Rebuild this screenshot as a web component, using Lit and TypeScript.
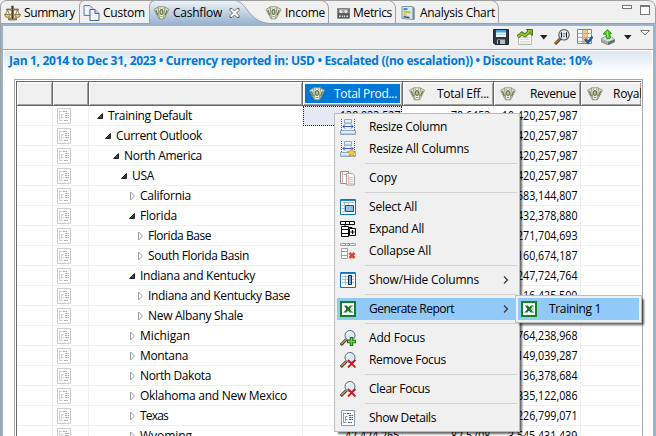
import { LitElement, html, css, svg, nothing, TemplateResult } from "lit";
import { customElement, property } from "lit/decorators.js";

/* A label that fills a given width, by tracking its letters or by narrowing them. */
@customElement("fit-text")
class FitText extends LitElement {
  @property({ type: Number }) width = 0;
  @property() text = "";
  @property({ type: Boolean }) narrow = false;
  static styles = css`
    :host { display: inline-block; flex: none; white-space: pre; }
    span { display: inline-block; transform-origin: 0 50%; }
  `;
  updated() {
    const s = this.shadowRoot!.querySelector("span")!;
    s.style.letterSpacing = "0px";
    s.style.transform = "none";
    const natural = s.getBoundingClientRect().width;
    if (!this.width || !this.text.length) return;
    if (this.narrow) {
      s.style.transform = `scaleX(${this.width / natural})`;
      this.style.width = this.width + "px";
    } else {
      s.style.letterSpacing = (this.width - natural) / this.text.length + "px";
    }
  }
  render() {
    return html`<span>${this.text}</span>`;
  }
}

const icons: Record<string, TemplateResult> = {
  scales: svg`<path d="M7 1h2v3h5v1h-5v8h3v2H4v-2h3V5H2V4h5z" fill="#b39b55" stroke="#5e4a1c" stroke-width=".6"/><path d="M3 5L.8 10M3 5l2.2 5M13 5l-2.2 5M13 5l2.2 5" stroke="#7d6a35" fill="none" stroke-width=".8"/><path d="M0 9.5h6q-.5 3-3 3t-3-3zM10 9.5h6q-.5 3-3 3t-3-3z" fill="#dccb8d" stroke="#69552a" stroke-width=".7"/><path d="M8 1v13" stroke="#4d3c18"/>`,
  pages: svg`<path d="M.5 .5h6l3 3v7h-9z" fill="#d7e2f0" stroke="#6280ae"/><path d="M2 2h3v7H2z" fill="#f6faff"/><path d="M6.500 4.500h5l4 4v7h-9z" fill="#f3f7fd" stroke="#4a628f"/><path d="M11.500 4.500v4h4" fill="#c3d3ea" stroke="#4a628f"/>`,
  cash: svg`<path d="M.5 4.300L4.500 2.200 8 12.500l-2.500 1.300zM15.500 4.300L11.500 2.200 8 12.500l2.500 1.300z" fill="#dfe4d0" stroke="#8a9272" stroke-width=".9"/><path d="M4.500 1.800h7L10 13.800H6z" fill="#eef1e4" stroke="#8a9272" stroke-width=".9"/><path d="M2.300 5l2.200 5.200M13.700 5l-2.200 5.200" stroke="#6f7d55" stroke-width="1.300" fill="none"/><ellipse cx="8" cy="7" rx="1.500" ry="2.400" fill="#c5cdb0" stroke="#66744b" stroke-width="1.100"/><path d="M6 3.300h1M9 3.300h1M7 11.500h2" stroke="#8b966f" fill="none"/>`,
  metrics: svg`<path d="M.5 2.500h15v12H.5z" fill="#55575a" stroke="#77797c"/><path d="M2 3h12v5H2z" fill="#a7a9aa"/><circle cx="5" cy="6" r="2.400" fill="#f7f7f7" stroke="#666" stroke-width=".5"/><circle cx="11" cy="6" r="2.400" fill="#f7f7f7" stroke="#666" stroke-width=".5"/><path d="M5 6l1-1M11 6l1-1" stroke="#333"/><path d="M2.500 11h2v2h-2zM6 11h1.500v2H6zM8.500 11H10v2H8.500zM11.500 11h2v2h-2z" fill="#e7e7e7"/>`,
  chart: svg`<path d="M1.500 1.500h10l2 1v12l-12-1z" fill="#dce5ee" stroke="#7f98aa"/><path d="M12 2l2 1v12l-2-1z" fill="#6e8997"/><path d="M3 3h4v2H3z" fill="#4a8cc6"/><path d="M3 5.500l7 1v2l-7-1z" fill="#a9c838"/><path d="M3 8.500l3 .2v2l-3-.2z" fill="#e1b72f"/><path d="M3 11l6 .7v1.600L3 12.500z" fill="#2c5a77"/>`,
  save: svg`<path d="M.5 .5h15v15H2L.5 14z" fill="#2f3943" stroke="#1d242b"/><path d="M3 1h10v7H3z" fill="#ecf5fc"/><path d="M3 1h10v2.500H3z" fill="#4ea2d8"/><path d="M3 5h10v1H3z" fill="#b8d4e8"/><path d="M4 10.500h8V15H4z" fill="#b7bdc2"/><path d="M5 11h2v4H5z" fill="#29333c"/>`,
  trend: svg`<path d="M1.500 5.500h13v10h-13z" fill="#fafbf8" stroke="#b7bbae"/><path d="M3 8.500h10M3 10.500h10M3 12.500h10M3 14h10" stroke="#d3d5c9" stroke-width=".8"/><path d="M.8 8.200L5 4.300l3 2.200 4.200-4" fill="none" stroke="#407415" stroke-width="3.400"/><path d="M9.500.5h6v6z" fill="#7eb522" stroke="#407415"/><path d="M1 8l4-3.500L8 6.700l5-5" fill="none" stroke="#97cc31" stroke-width="1.700"/>`,
  zoom: svg`<path d="M1 15l5.500-5.500" stroke="#5e3718" stroke-width="3"/><path d="M1 14.600L6 9.800" stroke="#b3763c" stroke-width="1.300"/><circle cx="10" cy="5.800" r="5.200" fill="#e4f0f7" stroke="#56636b" stroke-width="1.200"/><path d="M7.500 3.500v5M12.500 3.500v5M10 4.200v1.300M10 6.700V8M6.700 4.500l1-.8M11.700 4.500l1-.8" stroke="#111"/>`,
  grid: svg`<path d="M.5 .5h14v14H.5z" fill="#fff" stroke="#7483b0"/><path d="M5 1h5v13H5z" fill="#f7c87c"/><path d="M1 4.500h14M1 8.500h14M1 12.500h14M5.500 1v13M10.500 1v13" stroke="#a0add2"/><path d="M8 10l3 3.500 4.500-6" fill="none" stroke="#195aab" stroke-width="2.600"/>`,
  upload: svg`<path d="M1.500 9.500l7-3.500 6 4v3L8 16l-6.500-3z" fill="#a4a9a9" stroke="#777d7e" stroke-width=".7"/><path d="M2 9.700L9 6.500l5.300 3.500L8 12.800z" fill="#dcdfdd"/><path d="M8 13v3l6.500-3v-2.500z" fill="#687172"/><path d="M3 5L7.500.5l4 4-1.800.5.8 4-3.500 1-1-4.500z" fill="#50c51d" stroke="#24880d" stroke-width=".8"/><path d="M7 2.500l1 6" stroke="#9aed5e" stroke-width="1.300"/>`,
  fit: svg`<path d="M4.500.5h7v4h-7z" fill="#e6f0f9" stroke="#8fa9c0"/><path d="M5 3h6v1.500H5z" fill="#b2cce3"/><path d="M1.500 0v11M14.500 0v11" stroke="#3552d8" stroke-dasharray="1 1"/><path d="M3 7.500h10M5 5.500l-2 2 2 2M11 5.500l2 2-2 2" fill="none" stroke="#2449d2" stroke-width=".9"/><path d="M.5 11.500h15v4H.5z" fill="#e0ecf6" stroke="#8fa9c0"/><path d="M1 14h14v1H1z" fill="#b0cae1"/>`,
  star: svg`<path d="M11.500 7.500l1.200 2.700 3 .3-2.200 2 .7 3-2.700-1.600-2.600 1.600.7-3-2.200-2 3-.3z" fill="#f5cc36" stroke="#bb9020" stroke-width=".7"/>`,
  copy: svg`<path d="M.5 1.500h8v12h-8z" fill="#fff" stroke="#909090"/><path d="M2.500 2v11M3.500 4.500h4" stroke="#e7a8a8"/><path d="M6.500 3.500h6l2 2v9.500h-8z" fill="#faf6f6" stroke="#a3a3a3"/><path d="M8 7.500h5M8 9.500h5M8 11.500h5M8 13.500h5" stroke="#e5bebe"/><path d="M8.500 5v9" stroke="#efb1b1"/>`,
  selectAll: svg`<path d="M.5 .5h15v15H.5z" fill="#fff" stroke="#0d78b9"/><path d="M1 1h14v1H1z" fill="#198bc9"/><path d="M2 3.500h12M2 6.500h12M2 9.500h12M2 12.500h12M4.500 3v10M8.500 3v10" stroke="#b0bfcc"/><path d="M5.500 6.500h8v6h-8z" fill="#8fc3ea" stroke="#075b94"/>`,
  showHide: svg`<path d="M.5 .5h15v15H.5z" fill="#fff" stroke="#0d78b9"/><path d="M1 1h14v1H1z" fill="#198bc9"/><path d="M2 4.500h12M2 7.500h12M2 10.500h12M5.500 3v10" stroke="#b0bfcc"/><path d="M8.500 3.500h3v9h-3z" fill="#67aee3" stroke="#102d4b"/>`,
  expand: svg`<path d="M.5 .5h14v3H.5zM5.500.5v3M9.500.5v3M1.500 5.500h7v10h-7zM1.500 8.500h7M1.500 12.500h7M5 4v2" fill="#fff" stroke="#000"/><path d="M9 6.500h3v1" stroke="#000" fill="none"/><path d="M9.500 7.500h6v7h-6z" fill="#fff" stroke="#000"/><path d="M12.500 9v4M10.500 11h4" stroke="#000"/>`,
  collapse: svg`<path d="M.5 .5h15v2H.5zM5.500.5v2M9.500.5v2M1.500 5.500h6v10h-6zM1.500 8.500h6M1.500 12.500h6" fill="#fff" stroke="#a1a1a1"/><path d="M9.500 10l5 5M14.500 10l-5 5" stroke="#da4520" stroke-width="2.500"/>`,
  excel: svg`<path d="M1 1h14v14H1z" fill="#fff" stroke="#158125" stroke-width="2"/><path d="M4 4.500h3l1.300 2L10 4.500h2.500L9.800 8l3 3.500H9.500L8 9.500l-1.500 2h-3L6.400 8z" fill="#147529"/><path d="M10 5h3M10.500 8H13M10 11h3" stroke="#83b986"/>`,
  lens: svg`<path d="M.8 15l5.500-5.500" stroke="#49301f" stroke-width="3"/><path d="M1.300 14.300L6 9.700" stroke="#c89661" stroke-width="1.400"/><circle cx="10" cy="5.500" r="5" fill="#d9e9f5" stroke="#59656e"/><path d="M6.500 5q1-3 4-3" stroke="#fff" stroke-width="1.500" fill="none"/>`,
  plus: svg`<path d="M11.500 7v9M7 11.500h9" stroke="#217218" stroke-width="3.400"/><path d="M11.500 8v7M8 11.500h7" stroke="#75d33c" stroke-width="1.400"/>`,
  cross: svg`<path d="M8 8l7.500 7.500M15.500 8L8 15.500" stroke="#d01920" stroke-width="1.900"/>`,
  details: svg`<path d="M1.500 .5h13v15h-13z" fill="#fafcff" stroke="#8c9ba5"/><path d="M3.500 2.500v10M3.500 3.500H6M3.500 12.500h3M5.500 6v5M5.500 6.500h2M5.500 9.500h2" stroke="#62a6cf" fill="none"/><path d="M7 3.500h4M9 5.500h4M9 7.500h4M9 9.500h4M8 12.500h4" stroke="#555" stroke-dasharray="2 .5"/>`,
  rowDetails: svg`<path d="M1.500 .5h13v15h-13z" fill="#fcfcfc" stroke="#cdcdcd"/><path d="M3.500 2.500v10M3.500 3.500H6M3.500 12.500h3M5.500 6v5M5.500 6.500h2M5.500 9.500h2" stroke="#d0d0d0" fill="none"/><path d="M7 3.500h4M9 5.500h4M9 7.500h4M9 9.500h4M8 12.500h4" stroke="#aaa" stroke-dasharray="2 .5"/>`,
  chevron: svg`<path d="M6 4.500l3.500 3.500L6 11.500" fill="none" stroke="#333" stroke-width="1.200"/>`,
  down: svg`<path d="M4 6h7.500l-3.750 4.500z" fill="#222"/>`,
  view: svg`<path d="M3.500 1.500h9L8 6z" fill="#fff" stroke="#777"/>`,
  close: svg`<path d="M3.500 3.500h2L8 6l2.500-2.500h2v2L10 8l2.500 2.500v2h-2L8 10l-2.500 2.500h-2v-2L6 8 3.500 5.500z" fill="#fff" stroke="#555" stroke-width=".9"/>`,
};

const icon = (...names: string[]) =>
  html`<svg class="icon ${names[0]}" width="16" height="16" viewBox="0 0 16 16">${names.map((n) => icons[n])}</svg>`;
const label = (text: string, width: number, narrow = false) =>
  html`<fit-text .text=${text} .width=${width} .narrow=${narrow}></fit-text>`;

type Row = { name: string; w: number; level: number; open?: boolean; total?: string; eff?: string; revenue: string };
const rows: Row[] = [
  { name: "Training Default", w: 84, level: 0, open: true, total: "138,833,527", eff: "78.6453", revenue: "10,420,257,987" },
  { name: "Current Outlook", w: 86, level: 1, open: true, revenue: "10,420,257,987" },
  { name: "North America", w: 78, level: 2, open: true, revenue: "10,420,257,987" },
  { name: "USA", w: 22, level: 3, open: true, revenue: "10,420,257,987" },
  { name: "California", w: 51, level: 4, revenue: "583,144,807" },
  { name: "Florida", w: 37, level: 4, open: true, revenue: "432,378,880" },
  { name: "Florida Base", w: 63, level: 5, revenue: "271,704,693" },
  { name: "South Florida Basin", w: 101, level: 5, revenue: "160,674,187" },
  { name: "Indiana and Kentucky", w: 115, level: 4, open: true, revenue: "247,724,764" },
  { name: "Indiana and Kentucky Base", w: 142, level: 5, revenue: "16,425,500" },
  { name: "New Albany Shale", w: 95, level: 5, revenue: "" },
  { name: "Michigan", w: 50, level: 4, revenue: "764,238,968" },
  { name: "Montana", w: 48, level: 4, revenue: "149,039,287" },
  { name: "North Dakota", w: 71, level: 4, revenue: "136,378,684" },
  { name: "Oklahoma and New Mexico", w: 147, level: 4, revenue: "335,122,086" },
  { name: "Texas", w: 28, level: 4, revenue: "226,799,071" },
  { name: "Wyoming", w: 52, level: 4, total: "42,424,265", eff: "82.5708", revenue: "3,545,431,439" },
];

const numberWidth = (s: string) => [...s].reduce((n, c) => n + (c === "," || c === "." ? 2.8 : 6.1), 0);
const amount = (s?: string) => (s ? label(s, numberWidth(s), true) : nothing);

type Item = { icons: string[]; text: string; w: number; sub?: boolean; hot?: boolean } | null;
const menu: Item[] = [
  { icons: ["fit"], text: "Resize Column", w: 78 },
  { icons: ["fit", "star"], text: "Resize All Columns", w: 100 },
  null,
  { icons: ["copy"], text: "Copy", w: 28 },
  null,
  { icons: ["selectAll"], text: "Select All", w: 48 },
  { icons: ["expand"], text: "Expand All", w: 55 },
  { icons: ["collapse"], text: "Collapse All", w: 62 },
  null,
  { icons: ["showHide"], text: "Show/Hide Columns", w: 110, sub: true },
  null,
  { icons: ["excel"], text: "Generate Report", w: 85, sub: true, hot: true },
  null,
  { icons: ["lens", "plus"], text: "Add Focus", w: 56 },
  { icons: ["lens", "cross"], text: "Remove Focus", w: 77 },
  null,
  { icons: ["lens", "cross"], text: "Clear Focus", w: 61 },
  null,
  { icons: ["details"], text: "Show Details", w: 67 },
];

@customElement("app-root")
class AppRoot extends LitElement {
  static styles = css`
    :host { display: block; position: relative; width: 656px; height: 436px; overflow: hidden; background: #f0f0f0; color: #000; font: 12px/20px "Open Sans", "Noto Sans", sans-serif; }
    * { box-sizing: border-box; }
    .icon { flex: none; display: block; }
    .tabs { position: relative; display: flex; height: 24px; padding-top: 1px; }
    .shape { position: absolute; left: 0; top: 0; }
    .tab { position: relative; display: flex; align-items: center; gap: 3px; flex: none; height: 23px; }
    .summary { width: 80px; padding-left: 4px; }
    .custom { width: 69px; padding-left: 3px; }
    .cashflow { width: 115px; padding-left: 4px; }
    .income { width: 65px; padding-left: 1px; }
    .metrics { width: 67px; padding-left: 4px; }
    .analysis { width: 103px; padding-left: 4px; }
    .tab .icon { width: 17px; }
    .tab .close { margin-left: 1px; }
    .window { position: relative; display: flex; gap: 8px; margin-left: auto; padding: 4px 6px 0 0; }
    .min { width: 10px; height: 4px; border: 1px solid #777; background: #fff; }
    .max { width: 10px; height: 10px; border: 1px solid #777; border-top-width: 2px; background: #fff; }
    .body { height: 412px; border: solid #99b4d1; border-width: 2px 3px 0 2px; margin-left: 1px; box-shadow: -1px 0 #a0a0a0; background: #fff; }
    .tools { display: flex; align-items: center; justify-content: flex-end; height: 24px; padding-bottom: 1px; background: #f0f0f0; border-bottom: 1px solid #a5a5a5; }
    .trend { margin-left: 8px; }
    .trend + .down { margin-left: 3px; }
    .zoom { margin-left: 2px; }
    .grid, .upload { margin-left: 7px; }
    .upload + .down { margin-left: 4px; }
    .view { margin-left: 1px; }
    .heading { height: 29px; border: 1px solid #fff; border-bottom: 0; border-radius: 4px 4px 0 0; padding-left: 5px; line-height: 20px; font-weight: 700; color: #0078d7; background: linear-gradient(#dde6f0, #fff 22px); }
    .frame { width: 629px; height: 380px; margin-left: 11px; border: 1px solid #a8a8a8; padding: 1px 1px 0 1px; }
    .table { border: solid #696969; border-width: 1px 0 0 1px; overflow: hidden; height: 378px; }
    .line { display: grid; grid-template-columns: 36px 36px 214px 100px 91px 87px 60px; width: 624px; }
    .th { display: flex; align-items: center; height: 24px; padding: 1px 4px 0 6px; background: #f0f0f0; border-right: 1px solid #696969; border-bottom: 1px solid #696969; box-shadow: inset 1px 1px #fff, inset -1px -1px #a0a0a0; justify-content: space-between; overflow: hidden; }
    .picked { background: linear-gradient(#0078d7, #0078d7) 2px 2px / 95px 19px no-repeat #f0f0f0; color: #fff; padding-right: 5px; }
    .last { border-right: 0; justify-content: flex-start; gap: 10px; }
    .td { display: flex; align-items: center; height: 20px; border-right: 1px solid #f0f0f0; border-bottom: 1px solid #f0f0f0; overflow: hidden; }
    .td:last-child { border-right: 0; }
    .mark { padding: 1px 0 0 3px; }
    .num { justify-content: flex-end; padding-right: 3px; }
    .current { background: #e5e9f3; border: 1px dotted #222; margin-right: 1px; padding-right: 1px; }
    .indent { flex: none; width: calc(7px + var(--level) * 8px); }
    .node { flex: none; width: 12px; }
    .menu { position: absolute; left: 334px; top: 113px; width: 186px; height: 319px; padding: 2px 1px 2px 2px; background: #f0f0f0; border: 1px solid #bdbdbd; box-shadow: 3px 3px 2px -1px rgba(0, 0, 0, .6); }
    .item { display: flex; align-items: center; height: 22px; padding-left: 3px; }
    .item fit-text { margin-left: 13px; }
    .item .go { margin-left: auto; margin-right: 4px; }
    .hot { background: #91c9f7; }
    .rule { height: 7px; margin: 0 1px 0 28px; background: linear-gradient(#d2d2d2, #d2d2d2) 0 3px / 100% 1px no-repeat; }
    .sub { position: absolute; left: 515px; top: 295px; width: 127px; height: 28px; padding: 2px; background: #f0f0f0; border: 1px solid #bdbdbd; box-shadow: 3px 3px 2px -1px rgba(0, 0, 0, .6); }
    .sub fit-text { margin-left: 12px; }
  `;

  render() {
    return html`
      <div class="tabs">
        <svg class="shape" width="656" height="24">
          <defs><linearGradient id="sel" x2="0" y2="1"><stop stop-color="#f0f3f7" /><stop offset="1" stop-color="#99b4d1" /></linearGradient></defs>
          <path d="M.5 24V6Q1 1.500 6 .5H648Q655 1 655.500 8V24M79.500 23V6Q80 1 84 .5M.5 23.500H656M322 .5Q328 2 328.500 8V23M389 .5Q395 2 395.500 8V23M492 .5Q498 2 498.500 8V23" fill="none" stroke="#a0a0a0" />
          <path d="M149.500 24V6Q150 1 155 .5H234C248 1 247 22 270 23.500V24z" fill="url(#sel)" />
          <path d="M149.500 24V6Q150 1 155 .5H234C248 1 247 22 270 23.500" fill="none" stroke="#98a2ad" />
        </svg>
        <div class="tab summary">${icon("scales")}${label("Summary", 51)}</div>
        <div class="tab custom">${icon("pages")}${label("Custom", 42)}</div>
        <div class="tab cashflow">${icon("cash")}${label("Cashflow", 49)}${icon("close")}</div>
        <div class="tab income">${icon("cash")}${label("Income", 40)}</div>
        <div class="tab metrics">${icon("metrics")}${label("Metrics", 39)}</div>
        <div class="tab analysis">${icon("chart")}${label("Analysis Chart", 75)}</div>
        <div class="window"><div class="min"></div><div class="max"></div></div>
      </div>
      <div class="body">
        <div class="tools">
          ${["save", "trend", "down", "zoom", "grid", "upload", "down", "view"].map((n) => icon(n))}
        </div>
        <div class="heading">${label("Jan 1, 2014 to Dec 31, 2023 • Currency reported in: USD • Escalated ((no escalation)) • Discount Rate: 10%", 583)}</div>
        <div class="frame">
          <div class="table">
            <div class="line">
              <div class="th"></div><div class="th"></div><div class="th"></div>
              <div class="th picked">${icon("cash")}${label("Total Prod...", 63)}</div>
              <div class="th">${icon("cash")}${label("Total Eff...", 52)}</div>
              <div class="th">${icon("cash")}${label("Revenue", 46)}</div>
              <div class="th last">${icon("cash")}${label("Royal", 29)}</div>
            </div>
            ${rows.map(
              (r, i) => html`<div class="line">
                <div class="td"></div>
                <div class="td mark">${icon("rowDetails")}</div>
                <div class="td">
                  <span class="indent" style="--level:${r.level}"></span>
                  <svg class="node" width="12" height="12" viewBox="0 0 12 12">
                    ${r.open
                      ? svg`<path d="M6.500 3.500v5h-5z" fill="#404040" stroke="#222"/>`
                      : svg`<path d="M2.500 2v8l4-4z" fill="#fff" stroke="#999"/>`}
                  </svg>
                  ${label(r.name, r.w)}
                </div>
                <div class="td num ${i === 0 ? "current" : ""}">${amount(r.total)}</div>
                <div class="td num">${amount(r.eff)}</div>
                <div class="td num">${amount(r.revenue)}</div>
                <div class="td"></div>
              </div>`
            )}
          </div>
        </div>
      </div>
      <div class="menu">
        ${menu.map((m) =>
          m
            ? html`<div class="item ${m.hot ? "hot" : ""}">${icon(...m.icons)}${label(m.text, m.w)}${m.sub ? html`<svg class="go" width="16" height="16">${icons.chevron}</svg>` : nothing}</div>`
            : html`<div class="rule"></div>`
        )}
      </div>
      <div class="sub"><div class="item hot">${icon("excel")}${label("Training 1", 52)}</div></div>
    `;
  }
}
